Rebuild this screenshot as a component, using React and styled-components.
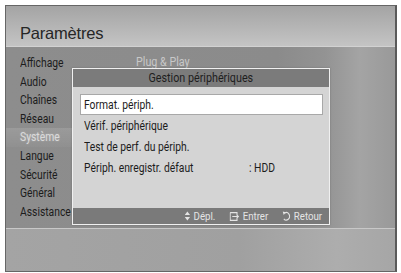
import React from 'react'
import styled, { createGlobalStyle } from 'styled-components'

const GlobalStyle = createGlobalStyle`
  html, body {
    margin: 0;
    padding: 0;
    background: #ffffff;
  }
  body {
    font-family: 'Roboto', 'Liberation Sans', sans-serif;
  }
`

const menuItems = [
  'Affichage',
  'Audio',
  'Chaînes',
  'Réseau',
  'Système',
  'Langue',
  'Sécurité',
  'Général',
  'Assistance',
]

const deviceItems = [
  { label: 'Format. périph.', selected: true },
  { label: 'Vérif. périphérique' },
  { label: 'Test de perf. du périph.' },
  { label: 'Périph. enregistr. défaut', value: ': HDD' },
]

function App() {
  return (
    <>
      <GlobalStyle />
      <Page>
        <Screen>
          <Header>
            <Title>Paramètres</Title>
          </Header>
          <Body>
            <Menu>
              {menuItems.map((item) => (
                <MenuItem key={item} active={item === 'Système'}>
                  <Narrow>{item}</Narrow>
                </MenuItem>
              ))}
            </Menu>
            <Pane>
              <PaneTitle>
                <Narrow>Plug &amp; Play</Narrow>
              </PaneTitle>
            </Pane>
            <Dialog>
              <DialogTitle>
                <Narrow origin="center">Gestion périphériques</Narrow>
              </DialogTitle>
              <DialogList>
                {deviceItems.map((item) => (
                  <DialogRow key={item.label} selected={item.selected}>
                    <RowLabel>
                      <Narrow>{item.label}</Narrow>
                    </RowLabel>
                    {item.value && <Narrow>{item.value}</Narrow>}
                  </DialogRow>
                ))}
              </DialogList>
              <DialogFooter>
                <Hints>
                  <Hint>
                    <svg width="6" height="10" viewBox="0 0 6 10">
                      <path d="M3 0.5 L6 4 L0 4 Z M3 9.5 L6 6 L0 6 Z" fill="#e4e4e4" />
                    </svg>
                    Dépl.
                  </Hint>
                  <Hint>
                    <svg width="11" height="9" viewBox="0 0 11 9">
                      <path
                        d="M0.6 0.6 H8.4 V3 M0.6 0.6 V8.4 H8.4 V6 M3 4.5 H10 M7.8 2.6 L10 4.5 L7.8 6.4"
                        fill="none"
                        stroke="#e4e4e4"
                        strokeWidth="1.2"
                      />
                    </svg>
                    Entrer
                  </Hint>
                  <Hint>
                    <svg width="9" height="10" viewBox="0 0 9 10">
                      <path
                        d="M2.4 2.2 A3.7 3.7 0 1 1 1.6 7.8"
                        fill="none"
                        stroke="#e4e4e4"
                        strokeWidth="1.2"
                      />
                      <path d="M0.3 0.6 L3.8 1.2 L1.5 4.1 Z" fill="#e4e4e4" />
                    </svg>
                    Retour
                  </Hint>
                </Hints>
              </DialogFooter>
            </Dialog>
          </Body>
          <Bottom />
        </Screen>
      </Page>
    </>
  )
}

const Page = styled.div`
  width: 401px;
  height: 273px;
  padding: 5px 4px 1px 5px;
  box-sizing: border-box;
  background: #ffffff;
`

const Screen = styled.div`
  position: relative;
  height: 100%;
  display: flex;
  flex-direction: column;
  border: 1px solid #666666;
  border-right: 2px solid #5a5a5a;
  box-sizing: border-box;
  overflow: hidden;
`

// the TV menu uses a condensed face; Roboto squeezed horizontally stands in for it
const Narrow = styled.span`
  display: inline-block;
  white-space: nowrap;
  transform: scaleX(0.86);
  transform-origin: ${(p) => p.origin || 'left'} center;
`

const Header = styled.div`
  height: 41px;
  display: flex;
  align-items: flex-end;
  padding: 0 0 3px 14px;
  box-sizing: border-box;
  background: linear-gradient(to bottom, #a4a4a4 0%, #b4b4b4 50%, #c4c4c4 100%);
  border-bottom: 1px solid #d2d2d2;
`

const Title = styled.div`
  font-family: 'Liberation Sans', Arial, sans-serif;
  font-size: 16.5px;
  color: #262626;
  letter-spacing: -0.2px;
`

const Body = styled.div`
  height: 181px;
  display: flex;
  background: linear-gradient(
    to right,
    #8d8d8d 0%,
    #8b8b8b 70%,
    #939393 82%,
    #a4a4a4 91%,
    #999999 100%
  );
  border-bottom: 1px solid #c8c8c8;
`

const Menu = styled.div`
  width: 116px;
  padding: 7px 0 0 0;
  box-sizing: border-box;
  display: flex;
  flex-direction: column;
`

const MenuItem = styled.div`
  height: 18.6px;
  line-height: 18.6px;
  padding-left: 14px;
  font-size: 12px;
  color: ${(p) => (p.active ? '#dadada' : '#1c1c1c')};
  text-shadow: ${(p) => (p.active ? '0 0 2px rgba(255,255,255,0.35)' : 'none')};
  background: ${(p) =>
    p.active
      ? 'linear-gradient(to bottom, rgba(255,255,255,0.12), rgba(255,255,255,0.03))'
      : 'transparent'};
`

const Pane = styled.div`
  flex: 1;
  padding: 6px 0 0 14px;
`

const PaneTitle = styled.div`
  height: 18px;
  line-height: 18px;
  font-size: 12.5px;
  color: #c8c8c8;
`

const Dialog = styled.div`
  position: absolute;
  left: 66px;
  top: 62px;
  width: 258px;
  height: 157px;
  box-sizing: border-box;
  border: 1px solid #f0f0f0;
  display: flex;
  flex-direction: column;
  background: #d4d4d4;
  box-shadow: 0 0 2px rgba(0, 0, 0, 0.2);
`

const DialogTitle = styled.div`
  height: 18px;
  line-height: 18px;
  text-align: center;
  font-size: 12.5px;
  color: #1e1e1e;
  background: #7b7b7b;
`

const DialogList = styled.div`
  flex: 1;
  padding: 7px 6px 0 7px;
  display: flex;
  flex-direction: column;
`

const DialogRow = styled.div`
  height: 21px;
  box-sizing: border-box;
  display: flex;
  align-items: center;
  padding-left: ${(p) => (p.selected ? '3px' : '4px')};
  background: ${(p) => (p.selected ? '#ffffff' : 'transparent')};
  border: ${(p) => (p.selected ? '1px solid #a8a8a8' : 'none')};
  font-size: 12px;
  color: #1c1c1c;
`

const RowLabel = styled.span`
  width: 165px;
`

const DialogFooter = styled.div`
  height: 16px;
  display: flex;
  align-items: center;
  justify-content: flex-end;
  padding-right: 7px;
  background: #7a7a7a;
  font-size: 11px;
  color: #e4e4e4;
`

const Hints = styled.div`
  display: flex;
  align-items: center;
  gap: 16px;
  transform: scaleX(0.88);
  transform-origin: right center;
`

const Hint = styled.span`
  display: flex;
  align-items: center;
  gap: 4px;
  white-space: nowrap;
`

const Bottom = styled.div`
  flex: 1;
  background: linear-gradient(to right, #a4a4a4 0%, #a0a0a0 60%, #adadad 85%, #a6a6a6 100%);
`

export default App
